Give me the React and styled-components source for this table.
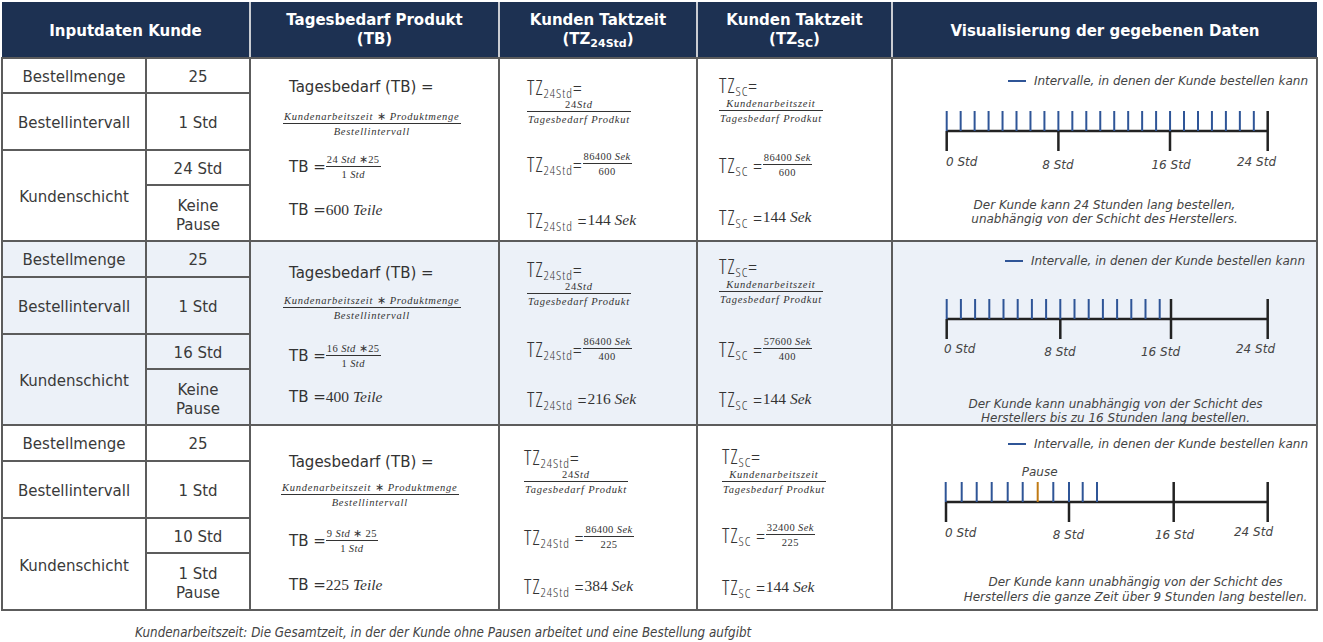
import React from 'react';
import styled, { createGlobalStyle } from 'styled-components';

const GlobalStyle = createGlobalStyle`
  html, body {
    margin: 0;
    padding: 0;
    background: #ffffff;
  }
  body {
    font-family: "DejaVu Sans", Verdana, sans-serif;
    color: #3a3a3a;
  }
`;

const Page = styled.div`
  width: 1323px;
  height: 642px;
  padding: 2px 0 0 1px;
  box-sizing: border-box;
  overflow: hidden;
`;

// Header row
const HeaderRow = styled.div`
  display: grid;
  grid-template-columns: 247px 247px 196px 193px 424px;
  gap: 2px;
  margin-left: 1px;
  width: 1315px;
  height: 55px;
  background: #c9ccd2;
`;

const HeaderCell = styled.div`
  background: #1d3152;
  color: #ffffff;
  font-family: "DejaVu Sans", Verdana, sans-serif;
  font-weight: bold;
  font-size: 15px;
  line-height: 19px;
  display: flex;
  align-items: center;
  justify-content: center;
  text-align: center;
  padding-top: ${(p) => p.$pt || 0}px;
  box-sizing: border-box;

  sub {
    font-size: 11px;
    line-height: 0;
    vertical-align: -3px;
  }
`;

// Body grid
const Body = styled.div`
  display: grid;
  grid-template-columns: 142px 102px 247px 196px 193px 423px;
  grid-template-rows: 33px 55px 33px 54px 34px 55px 33px 54px 34px 55px 33px 55px;
  gap: 2px;
  padding: 2px;
  width: 1317px;
  box-sizing: border-box;
  background: #5c5c5c;
`;

const InputCell = styled.div`
  background: ${(p) => (p.$tint ? '#ecf1f8' : '#ffffff')};
  grid-row: span ${(p) => p.$span || 1};
  display: flex;
  align-items: center;
  justify-content: center;
  text-align: center;
  font-size: 15px;
  line-height: 19px;
  color: #3a3a3a;
  padding-top: ${(p) => p.$pt || 3}px;
  box-sizing: border-box;
`;

const FormulaCell = styled.div`
  background: ${(p) => (p.$tint ? '#ecf1f8' : '#ffffff')};
  grid-row: span 4;
  display: flex;
  flex-direction: column;
  align-items: flex-start;
  padding-left: ${(p) => p.$pl}px;
  box-sizing: border-box;
  color: #333333;
`;

const EqLine = styled.div`
  display: flex;
  align-items: center;
  margin-top: ${(p) => p.$mt}px;
  margin-left: ${(p) => p.$ml || 0}px;
  height: ${(p) => p.$h || 20}px;
  font-family: "DejaVu Sans", Verdana, sans-serif;
  font-size: 15px;
  white-space: nowrap;
`;

const TzText = styled.span`
  font-family: "Open Sans", "DejaVu Sans", sans-serif;
  font-weight: 300;
  font-stretch: semi-condensed;
  font-size: 21px;
  line-height: 20px;
  letter-spacing: 1px;
  color: #333;
  white-space: nowrap;

  sub {
    font-size: 13px;
    line-height: 0;
    vertical-align: -3px;
  }
`;

const MathBig = styled.span`
  font-family: "Liberation Serif", "Times New Roman", serif;
  font-size: 15.5px;
  color: #333;

  i {
    font-style: italic;
  }
`;

const Frac = styled.span`
  display: inline-flex;
  flex-direction: column;
  align-items: center;
  margin-top: ${(p) => p.$mt || 0}px;
  margin-left: ${(p) => p.$ml || 0}px;
  font-family: "Liberation Serif", "Times New Roman", serif;
  font-size: ${(p) => p.$fs || 10.5}px;
  letter-spacing: ${(p) => p.$ls || 0.4}px;
  line-height: 11px;
  color: #333;

  i {
    font-style: italic;
  }
`;

const Num = styled.span`
  padding: 0 1px 1px;
  white-space: nowrap;
`;

const Bar = styled.span`
  align-self: stretch;
  height: 1px;
  background: #333;
`;

const Den = styled.span`
  padding: 2px 1px 0;
  white-space: nowrap;
`;

// Visualisation cell
const VizCell = styled.div`
  background: ${(p) => (p.$tint ? '#ecf1f8' : '#ffffff')};
  grid-row: span 4;
  display: flex;
  flex-direction: column;
  color: #444;
  font-family: "DejaVu Sans", Verdana, sans-serif;
  font-style: italic;
`;

const Legend = styled.div`
  display: flex;
  align-items: center;
  justify-content: flex-end;
  gap: 8px;
  margin-top: ${(p) => p.$mt}px;
  padding-right: ${(p) => p.$pr}px;
  font-size: 12px;
  line-height: 16px;
  white-space: nowrap;
`;

const LegendLine = styled.span`
  width: 18px;
  height: 2px;
  background: #2f5597;
`;

const Chart = styled.svg`
  display: block;
  margin-top: ${(p) => p.$mt}px;
  overflow: visible;
`;

const Note = styled.div`
  margin-top: ${(p) => p.$mt}px;
  padding-left: ${(p) => p.$pl || 0}px;
  text-align: center;
  font-size: 12px;
  line-height: ${(p) => p.$lh || 14}px;
`;

const Footer = styled.div`
  margin-top: 15px;
  padding-left: 134px;
  font-family: "DejaVu Sans Condensed", "DejaVu Sans", sans-serif;
  font-stretch: condensed;
  font-style: italic;
  font-size: 13.3px;
  line-height: 14px;
  color: #444;
`;

const BLUE = '#2f5597';
const BLACK = '#222222';
const ORANGE = '#c07a14';

const Timeline = ({ chart }) => (
  <Chart width="423" height="80" viewBox="0 0 423 80" $mt={chart.mt}>
    {chart.pause && (
      <text x={chart.pause} y="9.5" textAnchor="middle" dominantBaseline="central" fontSize="12" fontStyle="italic" fill="#444" fontFamily="DejaVu Sans, sans-serif">
        Pause
      </text>
    )}
    <line x1={chart.axis[0]} y1="40" x2={chart.axis[1]} y2="40" stroke={BLACK} strokeWidth="2.5" />
    {chart.ticks.map((t, i) => (
      <line key={'t' + i} x1={t.x} y1="20" x2={t.x} y2="40" stroke={t.orange ? ORANGE : BLUE} strokeWidth="2" />
    ))}
    {chart.below.map((x, i) => (
      <line key={'b' + i} x1={x} y1="40" x2={x} y2="60" stroke={BLACK} strokeWidth="2.5" />
    ))}
    {chart.full.map((x, i) => (
      <line key={'f' + i} x1={x} y1="20" x2={x} y2="60" stroke={BLACK} strokeWidth="2.5" />
    ))}
    {chart.labels.map((l, i) => (
      <text key={'l' + i} x={l.x} y={l.y} textAnchor={l.anchor || 'middle'} dominantBaseline="central" fontSize="12" fontStyle="italic" fill="#444" fontFamily="DejaVu Sans, sans-serif">
        {l.text}
      </text>
    ))}
  </Chart>
);

const range = (n, start, step) => Array.from({ length: n }, (_, i) => ({ x: start + i * step }));

const groups = [
  {
    tint: false,
    shift: '24 Std',
    pause: ['Keine', 'Pause'],
    tb: { mt: [18, 14, 17, 20], tbNum: '24', tbGap: ' \u2217', res: '600' },
    tz24: { pl: 27, mt: [18, 2, 27, 36], den: 'Tagesbedarf Prodkut', eq2: '=', num: '86400', den2: '600', res: '144' },
    tzsc: { pl: 21, mt: [16, 3, 29, 32], num: '86400', den2: '600', res: '144' },
    viz: {
      legend: { mt: 14, pr: 8 },
      chart: {
        mt: 2,
        axis: [53.7, 374.7],
        ticks: range(23, 53.7, 13.96),
        below: [53.7, 165.4, 277],
        full: [374.7],
        labels: [
          { text: '0 Std', x: 53, y: 71, anchor: 'start' },
          { text: '8 Std', x: 165, y: 74 },
          { text: '16 Std', x: 278, y: 74 },
          { text: '24 Std', x: 363.5, y: 71 },
        ],
      },
      note: { mt: 27, pl: 0, lh: 14, lines: ['Der Kunde kann 24 Stunden lang bestellen,', 'unabhängig von der Schicht des Herstellers.'] },
    },
  },
  {
    tint: true,
    shift: '16 Std',
    pause: ['Keine', 'Pause'],
    tb: { mt: [21, 12, 22, 18], tbNum: '16', tbGap: ' \u2217', res: '400' },
    tz24: { pl: 27, mt: [17, 2, 30, 30], den: 'Tagesbedarf Produkt', eq2: '=', num: '86400', den2: '400', res: '216' },
    tzsc: { pl: 21, mt: [14, 3, 32, 30], num: '57600', den2: '400', res: '144' },
    viz: {
      legend: { mt: 11, pr: 11 },
      chart: {
        mt: 10,
        axis: [53.7, 374.7],
        ticks: range(16, 53.7, 14.2),
        below: [53.7, 167.3],
        full: [278, 374.7],
        labels: [
          { text: '0 Std', x: 51, y: 70, anchor: 'start' },
          { text: '8 Std', x: 167, y: 73 },
          { text: '16 Std', x: 267.5, y: 73 },
          { text: '24 Std', x: 362.5, y: 70 },
        ],
      },
      note: { mt: 38, pl: 22, lh: 14, lines: ['Der Kunde kann unabhängig von der Schicht des', 'Herstellers bis zu 16 Stunden lang bestellen.'] },
    },
  },
  {
    tint: false,
    shift: '10 Std',
    pause: ['1 Std', 'Pause'],
    tb: { mt: [26, 10, 20, 21], tbNum: '9', tbGap: ' \u2217 ', res: '225', ml: -8 },
    tz24: { pl: 24, mt: [21, 2, 30, 29], den: 'Tagesbedarf Produkt', eq2: ' =', num: '86400', den2: '225', res: '384' },
    tzsc: { pl: 24, mt: [20, 3, 28, 32], num: '32400', den2: '225', res: '144' },
    viz: {
      legend: { mt: 10, pr: 8 },
      chart: {
        mt: 10,
        pause: 146.7,
        axis: [53, 374.7],
        ticks: [52.7, 68.7, 83.7, 98.7, 114.7, 129.7, 144.7, 160.3, 176, 189.7, 204].map((x, i) => ({ x, orange: i === 6 })),
        below: [53, 176],
        full: [280.7, 374.7],
        labels: [
          { text: '0 Std', x: 52, y: 70.5, anchor: 'start' },
          { text: '8 Std', x: 175.5, y: 73 },
          { text: '16 Std', x: 281.5, y: 73 },
          { text: '24 Std', x: 360.5, y: 70 },
        ],
      },
      note: { mt: 33, pl: 62, lh: 15, lines: ['Der Kunde kann unabhängig von der Schicht des', 'Herstellers die ganze Zeit über 9 Stunden lang bestellen.'] },
    },
  },
];

const TbCell = ({ tint, tb }) => (
  <FormulaCell $tint={tint} $pl={38}>
    <EqLine $mt={tb.mt[0]}>Tagesbedarf (TB) =</EqLine>
    <Frac $mt={tb.mt[1]} $ml={tb.ml ? -8 : -6} $ls={0.75}>
      <Num>
        <i>Kundenarbeitszeit</i> {'\u2217'} <i>Produktmenge</i>
      </Num>
      <Bar />
      <Den>
        <i>Bestellintervall</i>
      </Den>
    </Frac>
    <EqLine $mt={tb.mt[2]} $h={26}>
      TB =
      <Frac $ls={0.4}>
        <Num>
          {tb.tbNum} <i>Std</i>
          {tb.tbGap}25
        </Num>
        <Bar />
        <Den>
          1 <i>Std</i>
        </Den>
      </Frac>
    </EqLine>
    <EqLine $mt={tb.mt[3]}>
      TB =
      <MathBig>
        {tb.res} <i>Teile</i>
      </MathBig>
    </EqLine>
  </FormulaCell>
);

const Tz24Cell = ({ tint, tz }) => (
  <FormulaCell $tint={tint} $pl={tz.pl}>
    <EqLine $mt={tz.mt[0]} $h={20}>
      <TzText>
        TZ<sub>24Std</sub>=
      </TzText>
    </EqLine>
    <Frac $mt={tz.mt[1]} $ls={0.75}>
      <Num>
        24<i>Std</i>
      </Num>
      <Bar />
      <Den>
        <i>{tz.den}</i>
      </Den>
    </Frac>
    <EqLine $mt={tz.mt[2]} $h={24}>
      <TzText>
        TZ<sub>24Std</sub>
        {tz.eq2}
      </TzText>
      <Frac>
        <Num>
          {tz.num} <i>Sek</i>
        </Num>
        <Bar />
        <Den>{tz.den2}</Den>
      </Frac>
    </EqLine>
    <EqLine $mt={tz.mt[3] - 4} $h={24}>
      <TzText>
        TZ<sub>24Std</sub> =
      </TzText>
      <MathBig>
        {tz.res} <i>Sek</i>
      </MathBig>
    </EqLine>
  </FormulaCell>
);

const TzScCell = ({ tint, tz }) => (
  <FormulaCell $tint={tint} $pl={tz.pl}>
    <EqLine $mt={tz.mt[0]} $h={20}>
      <TzText>
        TZ<sub>SC</sub>=
      </TzText>
    </EqLine>
    <Frac $mt={tz.mt[1]} $ls={0.75}>
      <Num>
        <i>Kundenarbeitszeit</i>
      </Num>
      <Bar />
      <Den>
        <i>Tagesbedarf Prodkut</i>
      </Den>
    </Frac>
    <EqLine $mt={tz.mt[2]} $h={24}>
      <TzText>
        TZ<sub>SC</sub> =
      </TzText>
      <Frac>
        <Num>
          {tz.num} <i>Sek</i>
        </Num>
        <Bar />
        <Den>{tz.den2}</Den>
      </Frac>
    </EqLine>
    <EqLine $mt={tz.mt[3] - 4} $h={24}>
      <TzText>
        TZ<sub>SC</sub> =
      </TzText>
      <MathBig>
        {tz.res} <i>Sek</i>
      </MathBig>
    </EqLine>
  </FormulaCell>
);

const Visual = ({ tint, viz }) => (
  <VizCell $tint={tint}>
    <Legend $mt={viz.legend.mt} $pr={viz.legend.pr}>
      <LegendLine />
      Intervalle, in denen der Kunde bestellen kann
    </Legend>
    <Timeline chart={viz.chart} />
    <Note $mt={viz.note.mt} $pl={viz.note.pl} $lh={viz.note.lh}>
      {viz.note.lines.map((l) => (
        <div key={l}>{l}</div>
      ))}
    </Note>
  </VizCell>
);

const App = () => (
  <Page>
    <GlobalStyle />
    <HeaderRow>
      <HeaderCell $pt={3}>Inputdaten Kunde</HeaderCell>
      <HeaderCell>
        Tagesbedarf Produkt
        <br />
        (TB)
      </HeaderCell>
      <HeaderCell>
        <span>
          Kunden Taktzeit
          <br />
          (TZ<sub>24Std</sub>)
        </span>
      </HeaderCell>
      <HeaderCell>
        <span>
          Kunden Taktzeit
          <br />
          (TZ<sub>SC</sub>)
        </span>
      </HeaderCell>
      <HeaderCell $pt={4}>Visualisierung der gegebenen Daten</HeaderCell>
    </HeaderRow>
    <Body>
      {groups.map((g, gi) => (
        <React.Fragment key={gi}>
          <InputCell $tint={g.tint}>Bestellmenge</InputCell>
          <InputCell $tint={g.tint}>25</InputCell>
          <TbCell tint={g.tint} tb={g.tb} />
          <Tz24Cell tint={g.tint} tz={g.tz24} />
          <TzScCell tint={g.tint} tz={g.tzsc} />
          <Visual tint={g.tint} viz={g.viz} />
          <InputCell $tint={g.tint}>Bestellintervall</InputCell>
          <InputCell $tint={g.tint}>1 Std</InputCell>
          <InputCell $tint={g.tint} $span={2} $pt={4}>
            Kundenschicht
          </InputCell>
          <InputCell $tint={g.tint}>{g.shift}</InputCell>
          <InputCell $tint={g.tint} $pt={5}>
            {g.pause[0]}
            <br />
            {g.pause[1]}
          </InputCell>
        </React.Fragment>
      ))}
    </Body>
    <Footer>Kundenarbeitszeit: Die Gesamtzeit, in der der Kunde ohne Pausen arbeitet und eine Bestellung aufgibt</Footer>
  </Page>
);

export default App;
